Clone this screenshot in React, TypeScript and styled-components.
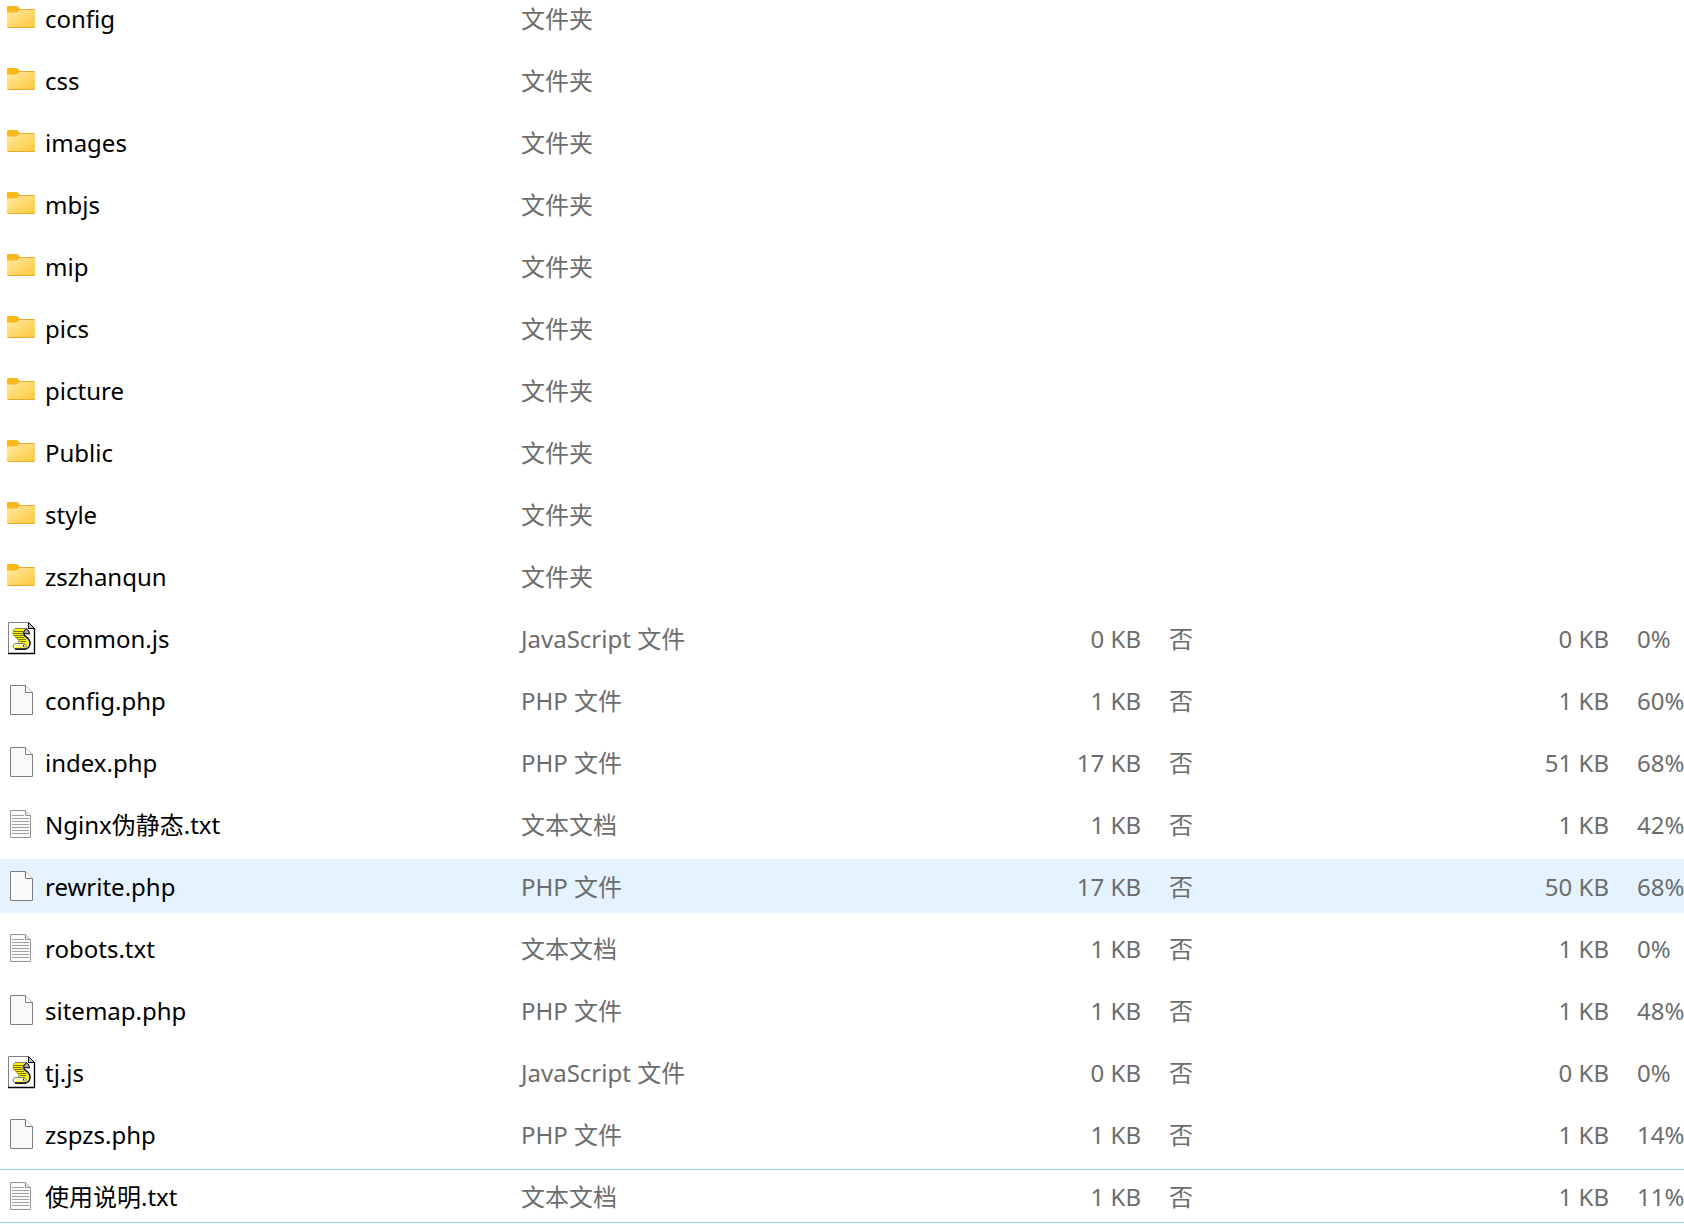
import React from "react";
import styled, { createGlobalStyle, css } from "styled-components";

const GlobalStyle = createGlobalStyle`
  body {
    margin: 0;
    background: #ffffff;
  }
`;

type Kind = "folder" | "js" | "php" | "txt";
type RowState = "normal" | "hover" | "focus";

interface Entry {
  name: string;
  kind: Kind;
  packed?: string;
  size?: string;
  ratio?: string;
  state?: RowState;
}

const typeLabels: Record<Kind, string> = {
  folder: "文件夹",
  js: "JavaScript 文件",
  php: "PHP 文件",
  txt: "文本文档",
};

const entries: Entry[] = [
  { name: "config", kind: "folder" },
  { name: "css", kind: "folder" },
  { name: "images", kind: "folder" },
  { name: "mbjs", kind: "folder" },
  { name: "mip", kind: "folder" },
  { name: "pics", kind: "folder" },
  { name: "picture", kind: "folder" },
  { name: "Public", kind: "folder" },
  { name: "style", kind: "folder" },
  { name: "zszhanqun", kind: "folder" },
  { name: "common.js", kind: "js", packed: "0 KB", size: "0 KB", ratio: "0%" },
  { name: "config.php", kind: "php", packed: "1 KB", size: "1 KB", ratio: "60%" },
  { name: "index.php", kind: "php", packed: "17 KB", size: "51 KB", ratio: "68%" },
  { name: "Nginx伪静态.txt", kind: "txt", packed: "1 KB", size: "1 KB", ratio: "42%" },
  { name: "rewrite.php", kind: "php", packed: "17 KB", size: "50 KB", ratio: "68%", state: "hover" },
  { name: "robots.txt", kind: "txt", packed: "1 KB", size: "1 KB", ratio: "0%" },
  { name: "sitemap.php", kind: "php", packed: "1 KB", size: "1 KB", ratio: "48%" },
  { name: "tj.js", kind: "js", packed: "0 KB", size: "0 KB", ratio: "0%" },
  { name: "zspzs.php", kind: "php", packed: "1 KB", size: "1 KB", ratio: "14%" },
  { name: "使用说明.txt", kind: "txt", packed: "1 KB", size: "1 KB", ratio: "11%", state: "focus" },
];

const Pane = styled.main`
  height: 100vh;
  overflow: hidden;
  background: #ffffff;
`;

/* The list is scrolled a little, so the first row starts above the pane. */
const FileTable = styled.table`
  width: 100%;
  margin-top: -17px;
  table-layout: fixed;
  border-collapse: separate;
  border-spacing: 0 8px;
  font-family: "Noto Sans", "Noto Sans CJK SC", sans-serif;
  font-size: 24px;
  line-height: 32px;
  color: #6d6d6d;
`;

const Column = styled.col<{ $width?: number }>`
  ${({ $width }) => $width && `width: ${$width}px;`}
`;

const Cell = styled.td<{ $align?: "left" | "right" }>`
  height: 50px;
  padding: 2px 0 0;
  border: 1px solid transparent;
  border-width: 1px 0;
  text-align: ${({ $align = "left" }) => $align};
  white-space: nowrap;
  vertical-align: middle;
`;

const Row = styled.tr<{ $state: RowState }>`
  ${({ $state }) =>
    $state === "hover" &&
    css`
      background: #e5f3ff;
    `}
  ${({ $state }) =>
    $state === "focus" &&
    css`
      & > ${Cell} {
        border-color: #99d1ff;
      }
    `}
`;

const NameBox = styled.div`
  display: flex;
  align-items: center;
  gap: 9px;
  padding-left: 6px;
  color: #000000;
`;

const Icon = styled.svg`
  flex: none;
  width: 30px;
  height: 34px;
`;

function FolderIcon() {
  return (
    <Icon viewBox="0 0 30 34" aria-hidden="true">
      <defs>
        <linearGradient id="folderFace" x1="0" y1="0" x2="1" y2="1">
          <stop offset="0" stopColor="#ffe9a4" />
          <stop offset="1" stopColor="#ffc937" />
        </linearGradient>
      </defs>
      <path d="M1 5q0-1 1-1h8.500q1 0 1.600 .8L14 7h14q1 0 1 1v6H1z" fill="#f9b81c" />
      <path d="M1 10.500h8.500q1 0 1.600-.6L13.500 8H29v17q0 1-1 1H2q-1 0-1-1z" fill="url(#folderFace)" />
      <path d="M13 7.500h15.500M1.500 25.500h27" stroke="#e8ab2c" />
    </Icon>
  );
}

function PageIcon() {
  return (
    <Icon viewBox="0 0 30 34" aria-hidden="true">
      <path d="M4.500 1.500h15l7 7v22h-22z" fill="#f9f9f9" stroke="#7d7d7d" />
      <path d="M19.500 1.500v7h7" fill="#ffffff" stroke="#7d7d7d" />
    </Icon>
  );
}

function TextIcon() {
  return (
    <Icon viewBox="0 0 30 34" aria-hidden="true">
      <path d="M4.500 2.500h15l5 5v22h-20z" fill="#f9f9f9" stroke="#949494" />
      <path d="M19.500 2.500v5h5" fill="#e8e8e8" stroke="#949494" />
      <path
        d="M6 7.500h12M6 10.500h17M6 13.500h17M6 16.500h17M6 19.500h17M6 22.500h17M6 25.500h17"
        stroke="#a0a0a0"
      />
    </Icon>
  );
}

function ScriptIcon() {
  return (
    <Icon viewBox="0 0 30 34" aria-hidden="true">
      <path d="M2.500 .5H22l6 6v25H2.500z" fill="#ffffff" />
      <path d="M2.500 31V.5H22" fill="none" stroke="#808080" />
      <path d="M22.500 .5v6h6z" fill="#c0c0c0" stroke="#000000" />
      <path d="M2 31.500h26.500V6" fill="none" stroke="#000000" strokeWidth="1.300" />
      {/* the scroll: sheet, upper curl, lower roll */}
      <path
        d="M9 6.500h12l-4 4q-1 2.500 2 4.500 5 2.500 5 6.500 0 4.500-4 5.500H11l2-6q.5-2.500-2-4.500-4-3-4-6 0-2.500 2-4z"
        fill="#fff200"
        stroke="#808080"
      />
      <path d="M8 9.500h9M7.500 11.500H16M8.500 13.500H17M10 15.500h8M12.500 17.500H20M14 19.500h6" stroke="#77770a" />
      <path d="M17.500 11.500q0-3.500 3-4.500 3 1 3 5z" fill="#a8a8a8" stroke="#000000" />
      <path d="M18 12q0 1.500 2 2.500 4.500 3 4 7.500-.5 4-4 5H9" fill="none" stroke="#000000" strokeWidth="1.300" />
      <path d="M9 21.500h9.500q2.500 1.500 1.500 5H9q-2-.5-2-2.500t2-2.500z" fill="#fffdc0" stroke="#808080" />
      <path d="M9 23.500h7M10 25.500h7" stroke="#fff200" strokeDasharray="1 1" />
      <path d="M18 22.500q-1.500 2 .5 2.500M9 27h11" fill="none" stroke="#000000" />
    </Icon>
  );
}

const icons: Record<Kind, () => React.JSX.Element> = {
  folder: FolderIcon,
  js: ScriptIcon,
  php: PageIcon,
  txt: TextIcon,
};

export default function App() {
  return (
    <>
      <GlobalStyle />
      <Pane>
        <FileTable>
          <colgroup>
            <Column $width={521} />
            <Column $width={420} />
            <Column $width={200} />
            <Column $width={28} />
            <Column $width={240} />
            <Column $width={200} />
            <Column $width={28} />
            <Column />
          </colgroup>
          <tbody>
            {entries.map((entry) => {
              const KindIcon = icons[entry.kind];
              return (
                <Row key={entry.name} $state={entry.state ?? "normal"}>
                  <Cell>
                    <NameBox>
                      <KindIcon />
                      <span>{entry.name}</span>
                    </NameBox>
                  </Cell>
                  <Cell>{typeLabels[entry.kind]}</Cell>
                  <Cell $align="right">{entry.packed}</Cell>
                  <Cell />
                  <Cell>{entry.packed && "否"}</Cell>
                  <Cell $align="right">{entry.size}</Cell>
                  <Cell />
                  <Cell>{entry.ratio}</Cell>
                </Row>
              );
            })}
          </tbody>
        </FileTable>
      </Pane>
    </>
  );
}
